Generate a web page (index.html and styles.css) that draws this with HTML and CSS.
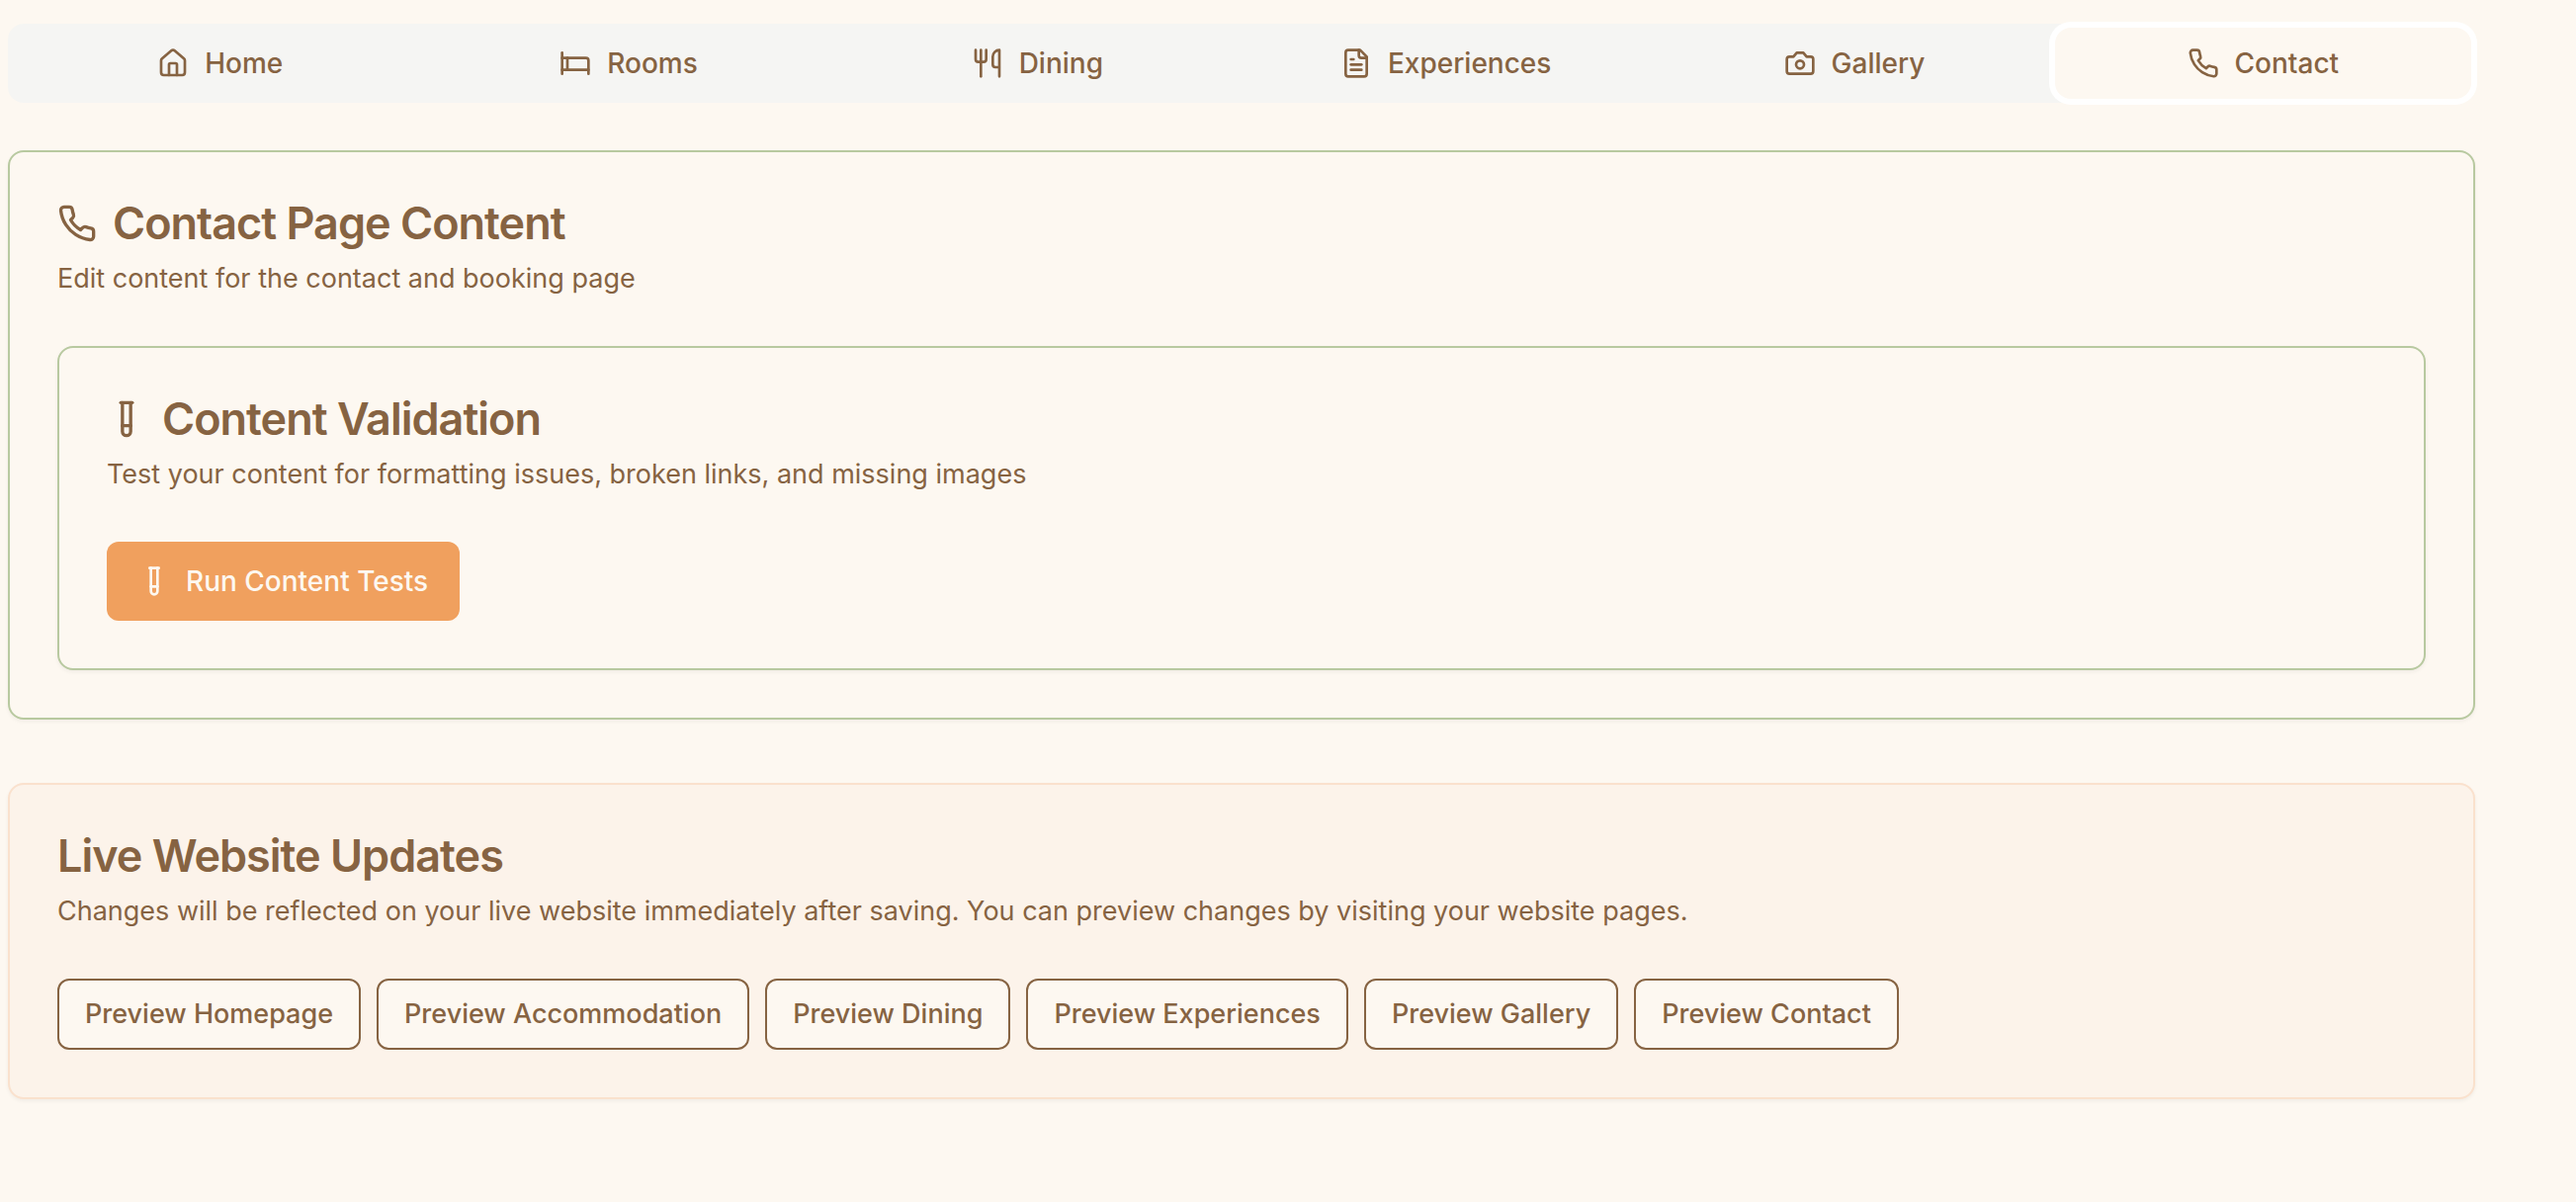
FILE: index.html
```html
<!DOCTYPE html>
<html lang="en">
<head>
<meta charset="utf-8">
<title>Website Content</title>
<link rel="stylesheet" href="styles.css">
</head>
<body>
<svg class="sprite" aria-hidden="true">
  <symbol id="house" viewBox="0 0 24 24"><path d="M15 21v-8a1 1 0 0 0-1-1h-4a1 1 0 0 0-1 1v8"/><path d="M3 10a2 2 0 0 1 .709-1.528l7-5.999a2 2 0 0 1 2.582 0l7 5.999A2 2 0 0 1 21 10v9a2 2 0 0 1-2 2H5a2 2 0 0 1-2-2z"/></symbol>
  <symbol id="bed" viewBox="0 0 24 24"><path d="M2 4v16"/><path d="M2 8h18a2 2 0 0 1 2 2v10"/><path d="M2 17h20"/><path d="M6 8v9"/></symbol>
  <symbol id="utensils" viewBox="0 0 24 24"><path d="M3 2v7c0 1.100.9 2 2 2h4a2 2 0 0 0 2-2V2"/><path d="M7 2v20"/><path d="M21 15V2a5 5 0 0 0-5 5v6c0 1.100.9 2 2 2h3Zm0 0v7"/></symbol>
  <symbol id="file" viewBox="0 0 24 24"><path d="M15 2H6a2 2 0 0 0-2 2v16a2 2 0 0 0 2 2h12a2 2 0 0 0 2-2V7Z"/><path d="M14 2v4a2 2 0 0 0 2 2h4"/><path d="M10 9H8"/><path d="M16 13H8"/><path d="M16 17H8"/></symbol>
  <symbol id="camera" viewBox="0 0 24 24"><path d="M14.500 4h-5L7 7H4a2 2 0 0 0-2 2v9a2 2 0 0 0 2 2h16a2 2 0 0 0 2-2V9a2 2 0 0 0-2-2h-3l-2.500-3z"/><circle cx="12" cy="13" r="3"/></symbol>
  <symbol id="phone" viewBox="0 0 24 24"><path d="M22 16.920v3a2 2 0 0 1-2.180 2 19.790 19.790 0 0 1-8.630-3.070 19.500 19.500 0 0 1-6-6 19.790 19.790 0 0 1-3.070-8.670A2 2 0 0 1 4.110 2h3a2 2 0 0 1 2 1.720 12.840 12.840 0 0 0 .700 2.810 2 2 0 0 1-.450 2.110L8.090 9.910a16 16 0 0 0 6 6l1.270-1.270a2 2 0 0 1 2.110-.450 12.840 12.840 0 0 0 2.810.700A2 2 0 0 1 22 16.920z"/></symbol>
  <symbol id="tube" viewBox="0 0 24 24"><path d="M14.500 2v17.500c0 1.400-1.100 2.500-2.500 2.500c-1.400 0-2.500-1.100-2.500-2.500V2"/><path d="M8.500 2h7"/><path d="M14.500 16h-5"/></symbol>
</svg>
<main class="page">
  <div class="tabs" role="tablist">
    <button class="tab" role="tab" type="button"><svg class="icon"><use href="#house"/></svg>Home</button>
    <button class="tab" role="tab" type="button"><svg class="icon"><use href="#bed"/></svg>Rooms</button>
    <button class="tab" role="tab" type="button"><svg class="icon"><use href="#utensils"/></svg>Dining</button>
    <button class="tab" role="tab" type="button"><svg class="icon"><use href="#file"/></svg>Experiences</button>
    <button class="tab" role="tab" type="button"><svg class="icon"><use href="#camera"/></svg>Gallery</button>
    <button class="tab tab-active" role="tab" type="button" aria-selected="true"><svg class="icon"><use href="#phone"/></svg>Contact</button>
  </div>
  <section class="card">
    <header class="card-header">
      <h2 class="card-title"><svg class="icon icon-large"><use href="#phone"/></svg>Contact Page Content</h2>
      <p class="card-text">Edit content for the contact and booking page</p>
    </header>
    <section class="card">
      <header class="card-header">
        <h2 class="card-title"><svg class="icon icon-large"><use href="#tube"/></svg>Content Validation</h2>
        <p class="card-text">Test your content for formatting issues, broken links, and missing images</p>
      </header>
      <button class="button button-primary" type="button"><svg class="icon"><use href="#tube"/></svg>Run Content Tests</button>
    </section>
  </section>
  <section class="card card-notice">
    <header class="card-header">
      <h2 class="card-title">Live Website Updates</h2>
      <p class="card-text">Changes will be reflected on your live website immediately after saving. You can preview changes by visiting your website pages.</p>
    </header>
    <div class="actions">
      <button class="button button-outline" type="button">Preview Homepage</button>
      <button class="button button-outline" type="button">Preview Accommodation</button>
      <button class="button button-outline" type="button">Preview Dining</button>
      <button class="button button-outline" type="button">Preview Experiences</button>
      <button class="button button-outline" type="button">Preview Gallery</button>
      <button class="button button-outline" type="button">Preview Contact</button>
    </div>
  </section>
</main>
</body>
</html>
```
FILE: styles.css
```css
:root {
  --cream: #fdf8f1;
  --brown: #866342;
  --green: #b8c9a0;
  --orange: #f0a05e;
}

* {
  box-sizing: border-box;
}

body {
  margin: 0;
  background: var(--cream);
  color: var(--brown);
  font-family: Inter, "Liberation Sans", sans-serif;
  font-size: 27px;
  line-height: 40px;
}

button {
  font: inherit;
  font-weight: 500;
  color: inherit;
  border: 0;
  cursor: pointer;
}

.sprite {
  display: none;
}

.page {
  padding: 24px 102px 104px 8px;
}

.icon {
  width: 32px;
  height: 32px;
  flex: none;
  fill: none;
  stroke: currentColor;
  stroke-width: 2;
  stroke-linecap: round;
  stroke-linejoin: round;
}

.icon-large {
  width: 40px;
  height: 40px;
}

.tabs {
  display: grid;
  grid-template-columns: repeat(6, 1fr);
  margin-bottom: 48px;
  padding: 8px;
  border-radius: 16px;
  background: #f5f5f3;
}

.tab {
  display: flex;
  align-items: center;
  justify-content: center;
  gap: 16px;
  padding: 12px 24px;
  border-radius: 12px;
  background: transparent;
}

.tab-active {
  background: var(--cream);
  box-shadow: 0 0 0 4px var(--cream), 0 0 0 10px #fff;
}

.card {
  padding: 48px;
  border: 2px solid var(--green);
  border-radius: 16px;
  background: var(--cream);
  box-shadow: 0 2px 4px rgb(0 0 0 / 5%);
}

.card-notice {
  margin-top: 64px;
  border-color: #fae1cd;
  background: #fcf3ea;
}

.card-header {
  display: flex;
  flex-direction: column;
  gap: 12px;
  margin-bottom: 48px;
}

.card-title {
  display: flex;
  align-items: center;
  gap: 16px;
  margin: 0;
  font-size: 45px;
  font-weight: 600;
  line-height: 48px;
  letter-spacing: -1px;
}

.card-text {
  margin: 0;
}

.actions {
  display: flex;
  flex-wrap: wrap;
  gap: 16px;
}

.button {
  display: inline-flex;
  align-items: center;
  gap: 16px;
  border-radius: 12px;
}

.tab,
.button-primary {
  font-size: 28px;
}

.button-primary {
  padding: 20px 32px;
  background: var(--orange);
  color: var(--cream);
}

.button-outline {
  padding: 14px 26px;
  border: 2px solid var(--brown);
  background: var(--cream);
}
```
